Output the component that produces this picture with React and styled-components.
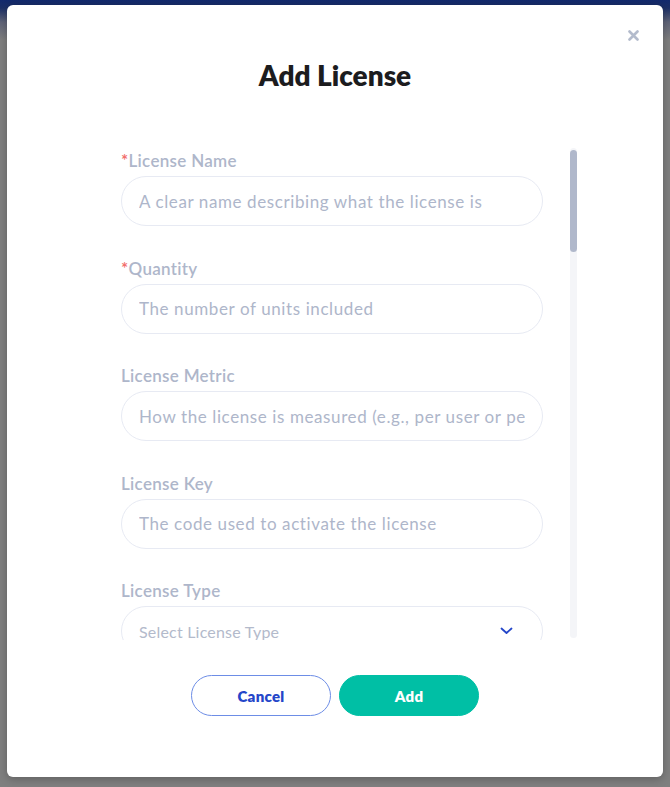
import React from 'react';
import styled, { createGlobalStyle } from 'styled-components';

const GlobalStyle = createGlobalStyle`
  * { box-sizing: border-box; }
  html, body {
    margin: 0;
    padding: 0;
    font-family: Lato, "Noto Sans", sans-serif;
  }
  body {
    background: linear-gradient(180deg, #12296d 0px, #1b2f66 8px, #5f6478 22px, #7f7f7f 40px, #7f7f7f 100%);
  }
`

const Backdrop = styled.div`
  width: 670px;
  height: 787px;
  padding: 5px 7px 10px 7px;
  display: flex;
`

const Modal = styled.div`
  position: relative;
  width: 656px;
  height: 772px;
  background: #fff;
  border-radius: 6px;
  box-shadow: 0 2px 8px rgba(0, 0, 0, 0.25);
  display: flex;
  flex-direction: column;
  align-items: center;
  padding-top: 53px;
`

const CloseButton = styled.button`
  position: absolute;
  top: 18px;
  right: 18px;
  width: 24px;
  height: 24px;
  border: none;
  background: none;
  padding: 0;
  display: flex;
  align-items: center;
  justify-content: center;
  cursor: pointer;
`

const Title = styled.h2`
  margin: 0;
  font-size: 28px;
  line-height: 34px;
  font-weight: 800;
  color: #1c1c1e;
`

const Body = styled.div`
  align-self: flex-start;
  margin: 56px 0 0 114px;
  height: 492px;
  display: flex;
  gap: 27px;
`

const ScrollArea = styled.div`
  width: 422px;
  height: 100%;
  overflow-y: auto;
  scrollbar-width: none;

  &::-webkit-scrollbar {
    display: none;
  }
`

const Track = styled.div`
  width: 7px;
  height: 490px;
  background: #f4f5f8;
  border-radius: 4px;
  display: flex;
  flex-direction: column;
`

const Thumb = styled.div`
  margin-top: 2px;
  width: 7px;
  height: ${p => p.$size}px;
  background: #b0b8cb;
  border-radius: 4px;
`

const Form = styled.form`
  display: flex;
  flex-direction: column;
  gap: 31.5px;
  padding-top: 2px;
  padding-bottom: 40px;
`

const Field = styled.div`
  display: flex;
  flex-direction: column;
  gap: 4px;
`

const Label = styled.label`
  font-size: 17px;
  line-height: 22px;
  font-weight: 600;
  color: #aeb6ca;
  letter-spacing: 0.3px;

  span {
    color: #f2706c;
  }
`

const Input = styled.input`
  width: 100%;
  height: 50px;
  border: 1px solid #e7eaf3;
  border-radius: 25px;
  padding: 0 17px;
  font-family: inherit;
  font-size: 17px;
  letter-spacing: 0.6px;
  color: #333;
  outline: none;

  &::placeholder {
    color: #aeb6ca;
  }
`

const SelectBox = styled.div`
  width: 100%;
  height: 50px;
  border: 1px solid #e7eaf3;
  border-radius: 25px;
  padding: 0 29px 0 17px;
  display: flex;
  align-items: center;
  justify-content: space-between;
  font-size: 16px;
  letter-spacing: 0.2px;
  color: #b3bacb;
`

const Footer = styled.div`
  display: flex;
  gap: 8px;
  margin-top: 35px;
`

const Button = styled.button`
  width: 140px;
  height: 41px;
  border-radius: 21px;
  font-family: inherit;
  font-size: 15px;
  font-weight: 800;
  letter-spacing: 0.3px;
  cursor: pointer;
  border: 1px solid ${p => p.$primary ? '#00bfa5' : '#6d8de6'};
  background: ${p => p.$primary ? '#00bfa5' : '#fff'};
  color: ${p => p.$primary ? '#fff' : '#2446c9'};
`

const fields = [
  { label: 'License Name', required: true, placeholder: 'A clear name describing what the license is' },
  { label: 'Quantity', required: true, placeholder: 'The number of units included' },
  { label: 'License Metric', placeholder: 'How the license is measured (e.g., per user or per device)' },
  { label: 'License Key', placeholder: 'The code used to activate the license' },
  { label: 'License Type', select: 'Select License Type' },
];

const Chevron = () => (
  <svg width="13" height="8" viewBox="0 0 13 8" fill="none">
    <path d="M1.5 1.5L6.5 6L11.5 1.5" stroke="#2446c9" strokeWidth="1.8" strokeLinecap="round" strokeLinejoin="round" />
  </svg>
)

const App = () => {
  return (
    <>
      <GlobalStyle />
      <Backdrop>
        <Modal>
          <CloseButton aria-label="Close">
            <svg width="11" height="11" viewBox="0 0 11 11">
              <path d="M1.5 1.5L9.5 9.5M9.5 1.5L1.5 9.5" stroke="#b3bbcc" strokeWidth="2.6" strokeLinecap="round" />
            </svg>
          </CloseButton>
          <Title>Add License</Title>
          <Body>
            <ScrollArea>
              <Form>
                {fields.map(f => (
                  <Field key={f.label}>
                    <Label>{f.required && <span>*</span>}{f.label}</Label>
                    {f.select ? (
                      <SelectBox>
                        {f.select}
                        <Chevron />
                      </SelectBox>
                    ) : (
                      <Input type="text" placeholder={f.placeholder} />
                    )}
                  </Field>
                ))}
              </Form>
            </ScrollArea>
            <Track>
              <Thumb $size={102} />
            </Track>
          </Body>
          <Footer>
            <Button type="button">Cancel</Button>
            <Button type="button" $primary>Add</Button>
          </Footer>
        </Modal>
      </Backdrop>
    </>
  )
}

export default App;
